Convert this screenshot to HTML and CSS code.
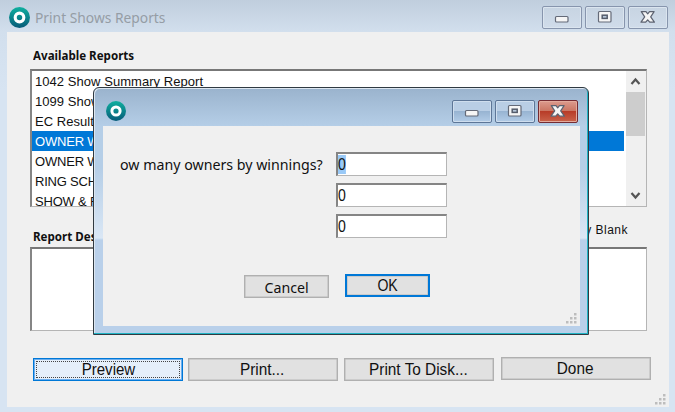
FILE: index.html
```html
<!DOCTYPE html>
<html lang="en">
<head>
<meta charset="utf-8">
<title>Print Shows Reports</title>
<link rel="stylesheet" href="styles.css">
</head>
<body>
<svg width="0" height="0" class="defs">
  <defs>
    <linearGradient id="teal" x1="0" y1="0" x2="0" y2="1"><stop offset="0" stop-color="#10b09f"/><stop offset="1" stop-color="#075a78"/></linearGradient>
    <symbol id="logo" viewBox="0 0 20 20"><circle cx="10" cy="10" r="10" fill="url(#teal)"/><circle cx="10" cy="10" r="4.1" fill="none" stroke="#fff" stroke-width="3"/></symbol>
    <symbol id="min" viewBox="0 0 38 21"><rect x="12.5" y="9.5" width="12.5" height="5.5" rx="1" fill="#f5f5f5" stroke="#646a78" stroke-width="1.2"/></symbol>
    <symbol id="max" viewBox="0 0 38 21"><rect x="12.5" y="4.5" width="12.5" height="10.5" rx="1" fill="#f5f5f5" stroke="#646a78" stroke-width="1.2"/><rect x="16.2" y="8.2" width="5" height="3.2" fill="#b8c8da" stroke="#555c6b" stroke-width="1.5"/></symbol>
    <symbol id="close" viewBox="0 0 38 21"><path d="M12.3 4.6H17L18.7 6.8L20.5 4.6H25.1L21.7 9.9L25.4 15.2H20.7L18.7 12.8L16.7 15.2H12L15.7 9.9Z" fill="#f5f5f5" stroke="#5c6270" stroke-width="1.2" stroke-linejoin="round"/></symbol>
    <symbol id="grip" viewBox="0 0 11 11"><path d="M8 0h2.5v2.5H8zM4 4h2.5v2.5H4zM8 4h2.5v2.5H8zM0 8h2.5v2.5H0zM4 8h2.5v2.5H4zM8 8h2.5v2.5H8z" fill="#bdbdbd"/></symbol>
  </defs>
</svg>
<main class="window">
  <header class="titlebar">
    <svg class="logo"><use href="#logo"/></svg>
    <h1 class="title"><span>Print Shows Reports</span></h1>
    <div class="controls">
      <button><svg><use href="#min"/></svg></button>
      <button><svg><use href="#max"/></svg></button>
      <button><svg><use href="#close"/></svg></button>
    </div>
  </header>
  <section class="client">
    <h2 class="label"><span>Available Reports</span></h2>
    <div class="listbox">
      <ul class="list">
        <li>1042 Show Summary Report</li>
        <li>1099 Show</li>
        <li>EC Results</li>
        <li class="selected">OWNER W</li>
        <li>OWNER W</li>
        <li>RING SCH</li>
        <li>SHOW &amp; R</li>
      </ul>
      <div class="scrollbar">
        <svg class="arrow" viewBox="0 0 20 20"><path d="M5.5 12.5L9.5 8L13.5 12.5" fill="none" stroke="#555" stroke-width="2.2"/></svg>
        <div class="thumb"></div>
        <svg class="arrow down" viewBox="0 0 20 20"><path d="M5.5 7.5L9.5 12L13.5 7.5" fill="none" stroke="#555" stroke-width="2.2"/></svg>
      </div>
    </div>
    <div class="desc-head"><h2 class="label"><span>Report Des</span></h2><span class="blank">y Blank</span></div>
    <div class="desc"></div>
    <div class="actions">
      <button class="btn focus"><span>Preview</span></button>
      <button class="btn"><span>Print...</span></button>
      <button class="btn"><span>Print To Disk...</span></button>
      <button class="btn done"><span>Done</span></button>
    </div>
    <svg class="grip"><use href="#grip"/></svg>
  </section>
</main>
<section class="dialog">
  <header class="dialog-bar">
    <svg class="logo"><use href="#logo"/></svg>
    <div class="controls">
      <button><svg><use href="#min"/></svg></button>
      <button><svg><use href="#max"/></svg></button>
      <button class="red"><svg><use href="#close"/></svg></button>
    </div>
  </header>
  <div class="dialog-client">
    <div class="form">
      <div class="question"><span>ow many owners by winnings?</span></div>
      <div class="fields">
        <div class="field"><span class="hl">0</span></div>
        <div class="field"><span>0</span></div>
        <div class="field"><span>0</span></div>
      </div>
    </div>
    <div class="dialog-actions">
      <button class="btn cancel"><span>Cancel</span></button>
      <button class="btn ok"><span>OK</span></button>
    </div>
    <svg class="grip"><use href="#grip"/></svg>
  </div>
</section>
</body>
</html>
```
FILE: styles.css
```css
* { box-sizing: border-box; }
body { margin: 0; width: 675px; height: 412px; overflow: hidden; font-family: "Liberation Sans", sans-serif; color: #111; }
h1, h2, ul { margin: 0; padding: 0; font-weight: normal; }
button { font: inherit; color: inherit; padding: 0; }
svg { display: block; }
.defs { position: absolute; }
.window { width: 675px; height: 412px; padding: 0 6px 5px 7px; background: linear-gradient(#c0cedd, #d2dfed 32px, #d7e4f2 90px); }
.titlebar { height: 32px; display: flex; padding-left: 2px; }
.logo { width: 21px; height: 21px; margin-top: 7px; }
.title { flex: 1; margin: 7px 0 0 5px; font: 15px/20px "Noto Sans", sans-serif; color: #959da5; white-space: nowrap; }
.title span, .label span, .question span, .cancel span { display: inline-block; transform-origin: 0 50%; transform: scaleX(.92); }
.controls { display: flex; gap: 3px; }
.controls button { width: 40px; height: 23px; border: 1px solid #8795ad; border-radius: 2px; background: linear-gradient(#c7d4e2, #d0dcea); box-shadow: inset 0 0 0 1px #dbe5ef; }
.controls svg { width: 38px; height: 21px; }
.titlebar .controls { margin: 6px 1px 0 0; }
.client { position: relative; height: 375px; padding: 0 22px 0 23px; background: #f0f0f0; }
.label { font: bold 12px/16px "Noto Sans", sans-serif; white-space: nowrap; }
.label span { transform: scaleX(.965); }
.client > .label { padding: 16px 0 0 3px; height: 37px; }
.listbox { display: flex; height: 138px; width: 617px; border: 2px solid #777; border-color: #777 #b5b5b5 #b5b5b5 #858585; border-right-width: 1px; border-bottom-width: 1px; background: #fff; overflow: hidden; }
.list { flex: 1; list-style: none; margin-right: 2px; font-size: 13px; letter-spacing: .05px; }
.list li { height: 20px; line-height: 22px; padding-left: 3px; white-space: nowrap; }
.list li:nth-child(n+4) { letter-spacing: -.2px; }
.list .selected { background: #0078d7; color: #fff; }
.scrollbar { width: 20px; display: flex; flex-direction: column; background: #f0f0f0; }
.arrow { width: 20px; height: 21px; }
.thumb { height: 44px; width: 19px; background: #cdcdcd; }
.down { margin-top: auto; }
.desc-head { display: flex; justify-content: space-between; height: 40px; padding: 22px 19px 0 3px; }
.blank { font-size: 12px; line-height: 16px; letter-spacing: .5px; margin-top: -7px; }
.desc { width: 617px; height: 84px; border: 1px solid #b5b5b5; border-top: 2px solid #777; border-left: 2px solid #858585; background: #fff; }
.actions { display: flex; gap: 6px; padding: 27px 0 0 3px; }
.btn { display: block; flex: none; width: 150px; height: 23px; border: 1px solid #b0b0b0; background: #e1e1e1; box-shadow: inset 0 0 0 .5px #b8b8b8; font-size: 16px; line-height: 20px; text-align: center; }
.actions .btn { margin-right: .4px; }
.btn span { display: inline-block; }
.actions .btn span { transform: translateX(-1px) scaleX(.96); }
.actions .btn.focus { margin-right: -1px; border: 1px solid #0078d7; background: #e5effa; outline: 1px dotted #444; outline-offset: -4px; box-shadow: inset 0 0 0 1px #6caeee; }
.actions .focus span { transform: scaleX(.94); }
.done { margin-top: -1px; }
.grip { width: 11px; height: 11px; position: absolute; right: 3px; bottom: 2px; }
.dialog { position: absolute; left: 93px; top: 87px; width: 496px; height: 248px; border: 1px solid #303a42; border-radius: 6px 6px 0 0; padding: 0 8px 8px 9px; background: linear-gradient(#9ab3cd, #b5cee7 38px, #b5cee7 80px, #dae7f5 150px, #b9d0ea 152px); box-shadow: inset -1px -1px #20b4c4, inset 1px 1px #dce6f0; }
.dialog-bar { display: flex; justify-content: space-between; height: 38px; padding-left: 3px; }
.dialog-bar .logo { margin-top: 13px; width: 20px; height: 20px; }
.dialog-bar .controls { margin: 12px 2px 0 0; }
.dialog-bar .controls button { border-color: #5d7697; background: linear-gradient(#b9cee5 48%, #98b4d2 50%, #b2cce7); box-shadow: inset 0 0 0 1px #cfdeee; }
.dialog-bar .controls .red { border-color: #742b32; background: linear-gradient(#dc9b8e 0, #ca7562 48%, #b83c28 50%, #c9634b); box-shadow: inset 0 0 0 1px #e3aa9c; }
.dialog-client { position: relative; height: 200px; background: #f0f0f0; }
.form { display: flex; padding: 26px 0 0 17px; }
.question { width: 216px; margin-top: 2px; font: 14.5px/20px "Noto Sans", sans-serif; white-space: nowrap; }
.question span { transform: scaleX(.98); }
.fields { display: flex; flex-direction: column; gap: 7px; }
.field { width: 111px; height: 24px; padding: 1px 0 0 0; border: 1px solid #b5b5b5; border-top: 2px solid #858585; border-left: 2px solid #858585; background: #fff; font-size: 16px; line-height: 19px; }
.field span { display: inline-block; transform: scaleX(.88); transform-origin: 0 50%; }
.hl { background: #99c9f7; }
.dialog-actions { display: flex; gap: 16px; padding: 36px 0 0 141px; }
.dialog-actions .btn { width: 85px; }
.btn.cancel { font: 14.5px/20px "Noto Sans", sans-serif; margin-top: 1px; }
.cancel span { transform-origin: 50% 50%; transform: scaleX(.98); }
.btn.ok { border: 2px solid #0078d7; line-height: 18px; }
.ok span { transform: scaleX(.88); }
```
